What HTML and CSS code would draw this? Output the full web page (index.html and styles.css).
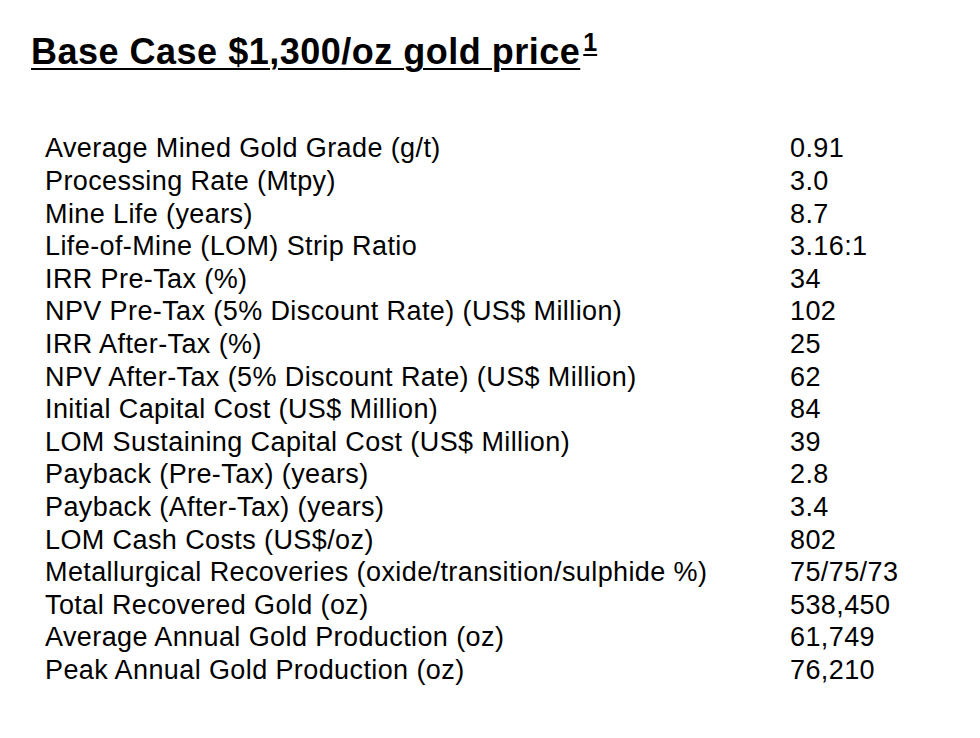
FILE: index.html
```html
<!DOCTYPE html>
<html>
<head>
<meta charset="utf-8">
<link rel="stylesheet" href="styles.css">
</head>
<body>
<div class="page">
  <h1 class="title">Base Case $1,300/oz gold price<span class="sup">1</span></h1>
  <div class="table">
    <div class="label">Average Mined Gold Grade (g/t)</div><div class="value">0.91</div>
    <div class="label">Processing Rate (Mtpy)</div><div class="value">3.0</div>
    <div class="label">Mine Life (years)</div><div class="value">8.7</div>
    <div class="label">Life-of-Mine (LOM) Strip Ratio</div><div class="value">3.16:1</div>
    <div class="label">IRR Pre-Tax (%)</div><div class="value">34</div>
    <div class="label">NPV Pre-Tax (5% Discount Rate) (US$ Million)</div><div class="value">102</div>
    <div class="label">IRR After-Tax (%)</div><div class="value">25</div>
    <div class="label">NPV After-Tax (5% Discount Rate) (US$ Million)</div><div class="value">62</div>
    <div class="label">Initial Capital Cost (US$ Million)</div><div class="value">84</div>
    <div class="label">LOM Sustaining Capital Cost (US$ Million)</div><div class="value">39</div>
    <div class="label">Payback (Pre-Tax) (years)</div><div class="value">2.8</div>
    <div class="label">Payback (After-Tax) (years)</div><div class="value">3.4</div>
    <div class="label">LOM Cash Costs (US$/oz)</div><div class="value">802</div>
    <div class="label">Metallurgical Recoveries (oxide/transition/sulphide %)</div><div class="value">75/75/73</div>
    <div class="label">Total Recovered Gold (oz)</div><div class="value">538,450</div>
    <div class="label">Average Annual Gold Production (oz)</div><div class="value">61,749</div>
    <div class="label">Peak Annual Gold Production (oz)</div><div class="value">76,210</div>
  </div>
</div>
</body>
</html>
```
FILE: styles.css
```css
html, body {
  margin: 0;
  padding: 0;
  background: #ffffff;
}
body {
  font-family: "Liberation Sans", Arial, sans-serif;
  color: #000000;
}
.page {
  width: 980px;
  height: 738px;
  overflow: hidden;
}
.title {
  margin: 0;
  padding: 30px 0 0 31px;
  font-size: 36px;
  line-height: 40px;
  font-weight: bold;
  letter-spacing: 0.5px;
  text-decoration: underline;
  text-decoration-thickness: 2px;
  text-underline-offset: 4px;
}
.sup {
  display: inline-block;
  font-size: 25px;
  line-height: 25px;
  vertical-align: 13px;
  letter-spacing: 0;
  margin-left: 3px;
  text-decoration: underline;
  text-decoration-thickness: 2px;
  text-underline-offset: 3px;
}
.table {
  display: grid;
  grid-template-columns: 745px auto;
  padding-left: 45px;
  margin-top: 60.4px;
  font-size: 27px;
  line-height: 32.6px;
  letter-spacing: 0.4px;
}
```
